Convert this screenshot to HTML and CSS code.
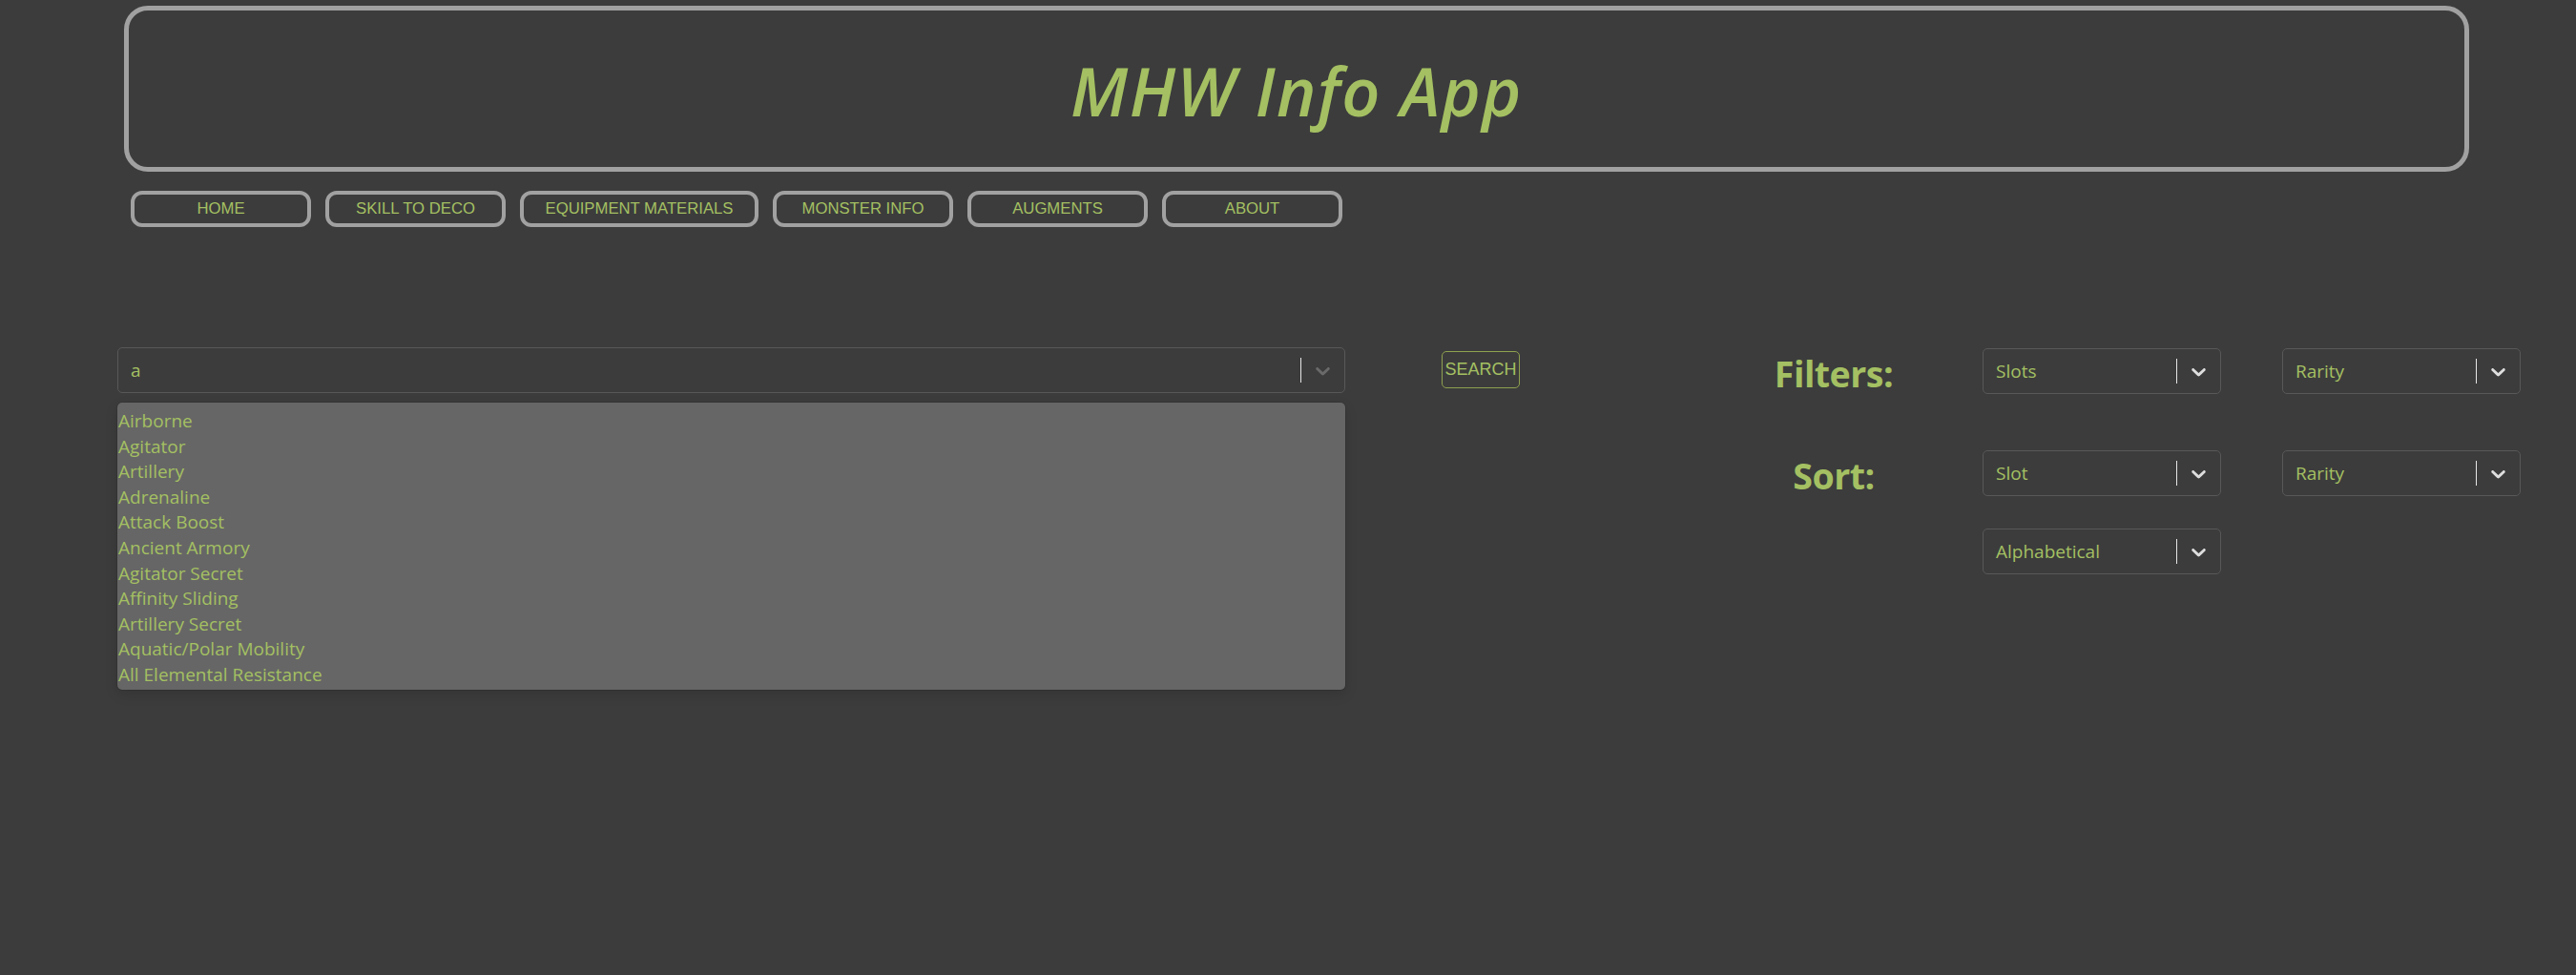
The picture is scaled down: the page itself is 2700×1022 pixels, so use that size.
FILE: index.html
```html
<!DOCTYPE html>
<html lang="en">
<head>
<meta charset="utf-8">
<title>MHW Info App</title>
<link rel="stylesheet" href="styles.css">
</head>
<body>
<header class="banner">
  <h1 class="title">MHW Info App</h1>
</header>
<nav class="nav">
  <button class="nav-btn">HOME</button>
  <button class="nav-btn">SKILL TO DECO</button>
  <button class="nav-btn nav-btn-wide">EQUIPMENT MATERIALS</button>
  <button class="nav-btn">MONSTER INFO</button>
  <button class="nav-btn">AUGMENTS</button>
  <button class="nav-btn">ABOUT</button>
</nav>
<main class="content">
  <section class="search-col">
    <div class="select select-search">
      <div class="select-value">a</div>
      <div class="indicators">
        <span class="separator"></span>
        <span class="chevron chevron-dim"><svg viewBox="0 0 20 20" width="25" height="25"><path d="M4.516 7.548c0.436-0.446 1.043-0.481 1.576 0l3.908 3.747 3.908-3.747c0.533-0.481 1.141-0.446 1.574 0 0.436 0.445 0.408 1.197 0 1.615-0.406 0.418-4.695 4.502-4.695 4.502-0.217 0.223-0.502 0.335-0.787 0.335s-0.57-0.112-0.789-0.335c0 0-4.287-4.084-4.695-4.502s-0.436-1.17 0-1.615z"/></svg></span>
      </div>
    </div>
    <ul class="menu">
      <li>Airborne</li>
      <li>Agitator</li>
      <li>Artillery</li>
      <li>Adrenaline</li>
      <li>Attack Boost</li>
      <li>Ancient Armory</li>
      <li>Agitator Secret</li>
      <li>Affinity Sliding</li>
      <li>Artillery Secret</li>
      <li>Aquatic/Polar Mobility</li>
      <li>All Elemental Resistance</li>
    </ul>
  </section>
  <button class="search-btn">SEARCH</button>
  <section class="controls">
    <div class="ctrl-grid">
      <div class="ctrl-label">Filters:</div>
      <div class="select">
        <div class="select-value">Slots</div>
        <div class="indicators"><span class="separator"></span><span class="chevron"><svg viewBox="0 0 20 20" width="25" height="25"><path d="M4.516 7.548c0.436-0.446 1.043-0.481 1.576 0l3.908 3.747 3.908-3.747c0.533-0.481 1.141-0.446 1.574 0 0.436 0.445 0.408 1.197 0 1.615-0.406 0.418-4.695 4.502-4.695 4.502-0.217 0.223-0.502 0.335-0.787 0.335s-0.57-0.112-0.789-0.335c0 0-4.287-4.084-4.695-4.502s-0.436-1.17 0-1.615z"/></svg></span></div>
      </div>
      <div class="select">
        <div class="select-value">Rarity</div>
        <div class="indicators"><span class="separator"></span><span class="chevron"><svg viewBox="0 0 20 20" width="25" height="25"><path d="M4.516 7.548c0.436-0.446 1.043-0.481 1.576 0l3.908 3.747 3.908-3.747c0.533-0.481 1.141-0.446 1.574 0 0.436 0.445 0.408 1.197 0 1.615-0.406 0.418-4.695 4.502-4.695 4.502-0.217 0.223-0.502 0.335-0.787 0.335s-0.57-0.112-0.789-0.335c0 0-4.287-4.084-4.695-4.502s-0.436-1.17 0-1.615z"/></svg></span></div>
      </div>
    </div>
    <div class="ctrl-grid ctrl-sort">
      <div class="ctrl-label">Sort:</div>
      <div class="select">
        <div class="select-value">Slot</div>
        <div class="indicators"><span class="separator"></span><span class="chevron"><svg viewBox="0 0 20 20" width="25" height="25"><path d="M4.516 7.548c0.436-0.446 1.043-0.481 1.576 0l3.908 3.747 3.908-3.747c0.533-0.481 1.141-0.446 1.574 0 0.436 0.445 0.408 1.197 0 1.615-0.406 0.418-4.695 4.502-4.695 4.502-0.217 0.223-0.502 0.335-0.787 0.335s-0.57-0.112-0.789-0.335c0 0-4.287-4.084-4.695-4.502s-0.436-1.17 0-1.615z"/></svg></span></div>
      </div>
      <div class="select">
        <div class="select-value">Rarity</div>
        <div class="indicators"><span class="separator"></span><span class="chevron"><svg viewBox="0 0 20 20" width="25" height="25"><path d="M4.516 7.548c0.436-0.446 1.043-0.481 1.576 0l3.908 3.747 3.908-3.747c0.533-0.481 1.141-0.446 1.574 0 0.436 0.445 0.408 1.197 0 1.615-0.406 0.418-4.695 4.502-4.695 4.502-0.217 0.223-0.502 0.335-0.787 0.335s-0.57-0.112-0.789-0.335c0 0-4.287-4.084-4.695-4.502s-0.436-1.17 0-1.615z"/></svg></span></div>
      </div>
      <div class="select select-col2">
        <div class="select-value">Alphabetical</div>
        <div class="indicators"><span class="separator"></span><span class="chevron"><svg viewBox="0 0 20 20" width="25" height="25"><path d="M4.516 7.548c0.436-0.446 1.043-0.481 1.576 0l3.908 3.747 3.908-3.747c0.533-0.481 1.141-0.446 1.574 0 0.436 0.445 0.408 1.197 0 1.615-0.406 0.418-4.695 4.502-4.695 4.502-0.217 0.223-0.502 0.335-0.787 0.335s-0.57-0.112-0.789-0.335c0 0-4.287-4.084-4.695-4.502s-0.436-1.17 0-1.615z"/></svg></span></div>
      </div>
    </div>
  </section>
</main>
</body>
</html>
```

FILE: styles.css
```css
html, body {
  margin: 0;
  padding: 0;
  background: #3c3c3c;
  height: 100%;
}

body {
  color: #a4c062;
  font-family: "Open Sans", "Noto Sans", sans-serif;
}

.banner {
  box-sizing: border-box;
  margin: 6px 0 0 130px;
  width: 2458px;
  height: 174px;
  border: 5px solid #a1a1a1;
  border-radius: 25px;
  display: flex;
  align-items: center;
  justify-content: center;
}

.title {
  margin: 0;
  padding-top: 4px;
  font-family: "Open Sans", "Noto Sans", sans-serif;
  font-style: italic;
  font-weight: 600;
  font-size: 70px;
  line-height: 1;
  letter-spacing: 1.5px;
  color: #a4c062;
}

.nav {
  display: flex;
  gap: 15px;
  margin: 20px 0 0 137px;
}

.nav-btn {
  box-sizing: border-box;
  width: 189px;
  height: 38px;
  padding: 0;
  background: #3c3c3c;
  border: 4px solid #a1a1a1;
  border-radius: 12px;
  color: #a4c062;
  font-family: "Liberation Sans", Arial, sans-serif;
  font-size: 16.7px;
}

.nav-btn-wide {
  width: 250px;
}

.content {
  display: flex;
  align-items: flex-start;
  margin-top: 126px;
}

.search-col {
  margin-left: 123px;
  width: 1287px;
}

.select {
  box-sizing: border-box;
  display: flex;
  align-items: center;
  height: 48px;
  border: 1.25px solid #585858;
  border-radius: 5px;
  background: #3c3c3c;
  font-size: 19px;
}

.select-value {
  flex: 1;
  padding-left: 13px;
  color: #a4c062;
  white-space: nowrap;
}

.indicators {
  display: flex;
  align-items: center;
  align-self: stretch;
}

.separator {
  width: 1.25px;
  align-self: stretch;
  margin: 10px 0;
  background: #e6e6e6;
}

.chevron {
  display: flex;
  padding: 0 10px;
  fill: #dedede;
}

.chevron-dim {
  fill: #6a6a6a;
}

.menu {
  list-style: none;
  margin: 10px 0 0;
  padding: 6px 0 2px;
  background: #666666;
  border-radius: 5px;
  box-shadow: 0 0 0 1px rgba(0, 0, 0, 0.1), 0 5px 14px rgba(0, 0, 0, 0.12);
  font-size: 19px;
  line-height: 26.6px;
}

.menu li {
  padding: 0 1px;
}

.search-btn {
  box-sizing: border-box;
  margin: 4px 0 0 101px;
  width: 82px;
  height: 39px;
  padding: 0;
  background: #3c3c3c;
  border: 1.25px solid #8ea14f;
  border-radius: 5px;
  color: #a4c062;
  font-family: "Liberation Sans", Arial, sans-serif;
  font-size: 18px;
}

.controls {
  margin: 1px 0 0 237px;
}

.ctrl-grid {
  display: grid;
  grid-template-columns: 184px 250px 250px;
  grid-auto-rows: 48px;
  column-gap: 64px;
  row-gap: 34px;
  align-items: center;
}

.ctrl-sort {
  margin-top: 59px;
}

.ctrl-label {
  box-sizing: border-box;
  height: 48px;
  padding-top: 6px;
  text-align: center;
  font-weight: 700;
  font-size: 37.5px;
  line-height: 42px;
  letter-spacing: -0.5px;
  color: #a4c062;
}

.select-col2 {
  grid-column: 2;
}
```
